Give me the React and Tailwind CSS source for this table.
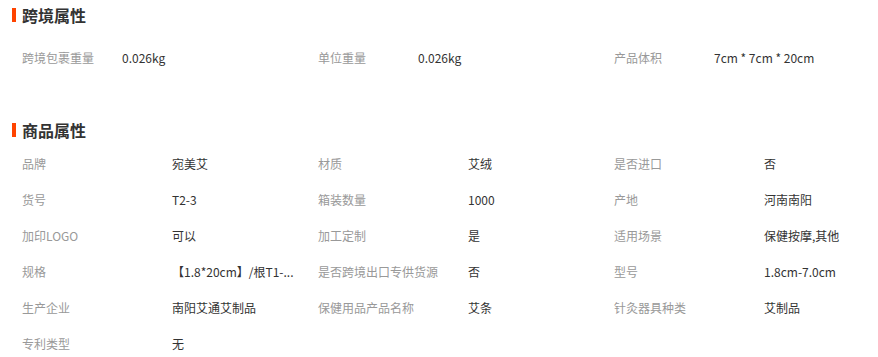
const crossBorder = [
  ["跨境包裹重量", "0.026kg"],
  ["单位重量", "0.026kg"],
  ["产品体积", "7cm * 7cm * 20cm"],
];

const productAttrs = [
  ["品牌", "宛美艾"],
  ["材质", "艾绒"],
  ["是否进口", "否"],
  ["货号", "T2-3"],
  ["箱装数量", "1000"],
  ["产地", "河南南阳"],
  ["加印LOGO", "可以"],
  ["加工定制", "是"],
  ["适用场景", "保健按摩,其他"],
  ["规格", "【1.8*20cm】/根T1-..."],
  ["是否跨境出口专供货源", "否"],
  ["型号", "1.8cm-7.0cm"],
  ["生产企业", "南阳艾通艾制品"],
  ["保健用品产品名称", "艾条"],
  ["针灸器具种类", "艾制品"],
  ["专利类型", "无"],
];

function Title({ children }) {
  return (
    <div className="flex h-[30px] items-center pl-3">
      <span className="mr-[6px] h-[14px] w-[4px] bg-[#ff4400]" />
      <h2 className="text-[16px] font-bold text-[#333]">{children}</h2>
    </div>
  );
}

export default function App() {
  return (
    <div className="h-[357px] w-[878px] overflow-hidden bg-white font-['Noto_Sans_CJK_SC','Noto_Sans',sans-serif] text-[12px]">
      <Title>跨境属性</Title>
      <div className="mt-[10px] grid grid-cols-[296px_296px_286px] pl-[22px]">
        {crossBorder.map(([k, v]) => (
          <div key={k} className="flex h-9 items-center">
            <span className="w-[100px] shrink-0 text-[#999]">{k}</span>
            <span className="text-[#333]">{v}</span>
          </div>
        ))}
      </div>
      <div className="mt-[39px]">
        <Title>商品属性</Title>
      </div>
      <div className="mt-px grid grid-cols-[296px_296px_264px] pl-[22px]">
        {productAttrs.map(([k, v]) => (
          <div key={k} className="flex h-9 items-center">
            <span className="w-[150px] shrink-0 text-[#999]">{k}</span>
            <span className="whitespace-nowrap text-[#333]">{v}</span>
          </div>
        ))}
      </div>
    </div>
  );
}
